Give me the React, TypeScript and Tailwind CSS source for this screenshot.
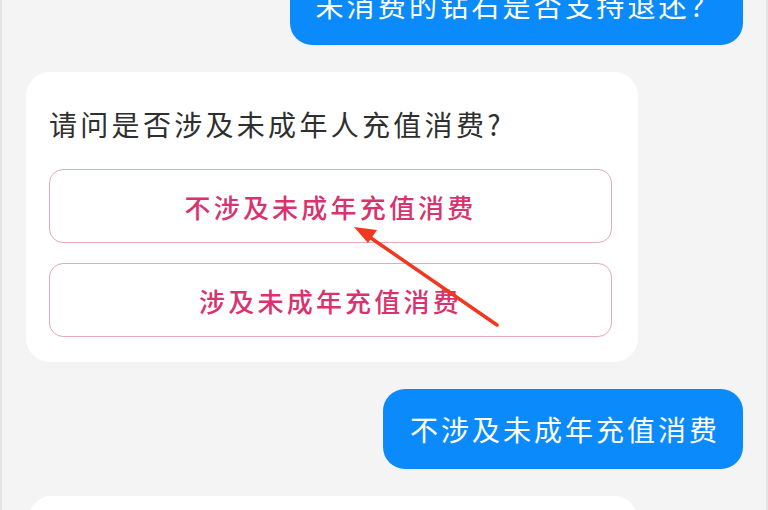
import React from "react";

const font = { fontFamily: '"Noto Sans CJK SC", "Noto Sans", sans-serif' };

export default function App() {
  return (
    <div
      className="relative h-[510px] w-[768px] overflow-hidden bg-[#f4f4f4] border-l-2 border-r-2 border-[#e4e4e4]"
      style={font}
    >
      <div className="flex flex-col">
        <div className="mt-[-35px] mr-[23px] self-end flex h-[80px] items-center rounded-[22px] bg-[#0b8afc] pl-[25px] pr-[22px] text-[28px] tracking-[3.2px] text-white">
          未消费的钻石是否支持退还？
        </div>

        <div className="ml-[24px] mt-[27px] flex h-[290px] w-[612px] flex-col rounded-[24px] bg-white pl-[23px] pt-[34px]">
          <div className="h-[36px] leading-[36px] text-[28px] tracking-[3.3px] text-[#2f2f2f]">
            请问是否涉及未成年人充值消费?
          </div>
          <div className="mt-[27px] flex h-[74px] w-[563px] items-center justify-center rounded-[14px] border border-[#e2a9bf] text-[26px] font-medium tracking-[3.2px] text-[#d8336f]">
            不涉及未成年充值消费
          </div>
          <div className="mt-[20px] flex h-[74px] w-[563px] items-center justify-center rounded-[14px] border border-[#e2a9bf] text-[26px] font-medium tracking-[3.2px] text-[#d8336f]">
            涉及未成年充值消费
          </div>
        </div>

        <div className="mt-[27px] mr-[23px] self-end flex h-[80px] items-center rounded-[22px] bg-[#0b8afc] pl-[27px] pr-[23px] text-[28px] tracking-[3px] text-white">
          不涉及未成年充值消费
        </div>

        <div className="ml-[26px] mt-[27px] h-[200px] w-[610px] rounded-[24px] bg-white" />
      </div>

      <svg
        className="pointer-events-none absolute left-0 top-0"
        width="768"
        height="510"
        viewBox="0 0 768 510"
      >
        <line x1="495" y1="325" x2="366" y2="236" stroke="#f0381f" strokeWidth="3.5" strokeLinecap="round" />
        <polygon points="352,227 375,230 366,243" fill="#f0381f" />
      </svg>
    </div>
  );
}
